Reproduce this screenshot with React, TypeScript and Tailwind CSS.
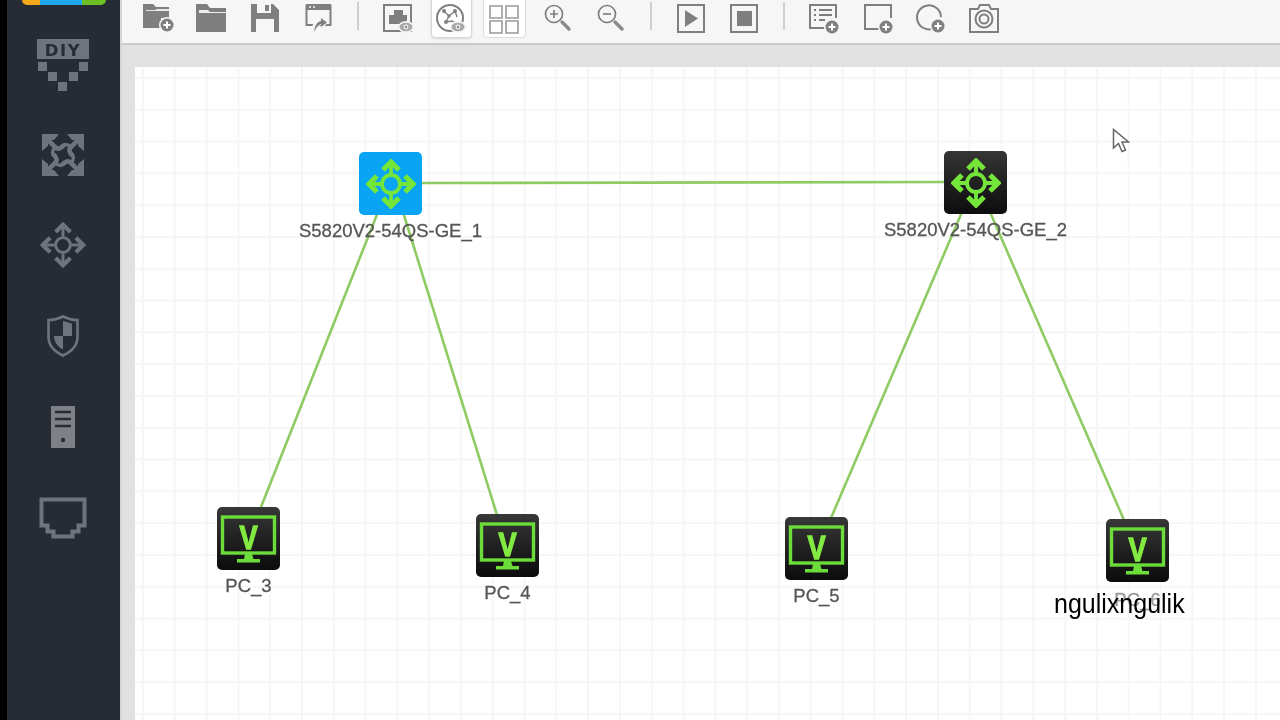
import React from "react";

const G = "#7f7f7f";

function Plus({ cx, cy, r = 6.5 }: { cx: number; cy: number; r?: number }) {
  return (
    <g>
      <circle cx={cx} cy={cy} r={r + 1.5} fill="#f5f5f5" />
      <circle cx={cx} cy={cy} r={r} fill={G} />
      <path d={`M${cx - 3.5} ${cy}H${cx + 3.5}M${cx} ${cy - 3.5}V${cy + 3.5}`} stroke="#fff" strokeWidth="2" />
    </g>
  );
}

function Eye({ cx, cy }: { cx: number; cy: number }) {
  return (
    <g>
      <ellipse cx={cx} cy={cy} rx="8" ry="6" fill="#f5f5f5" />
      <ellipse cx={cx} cy={cy} rx="6.5" ry="4.2" fill="#a9a9a9" />
      <circle cx={cx} cy={cy} r="2.4" fill="#f1f1f1" />
      <circle cx={cx} cy={cy} r="1.2" fill="#8a8a8a" />
    </g>
  );
}

function TI({ children }: { children: React.ReactNode }) {
  return (
    <svg width="32" height="32" viewBox="0 0 32 32" className="shrink-0" fill="none">
      {children}
    </svg>
  );
}

const Sep = () => <div className="w-[2px] h-[28px] bg-[#cfcfcf] mx-[1.7px] shrink-0" />;

function Toolbar() {
  return (
    <div className="h-[45px] bg-[#f6f6f6] border-b-2 border-[#c9c9c9] flex items-start pt-[2px] pl-[20px] gap-[21.3px]">
      <TI>
        <path d="M1 2h10l3 3h13v11H19v10H1z" fill={G} />
        <path d="M4 8h9l2-1h12v2H4z" fill="#e9e9e9" />
        <Plus cx={25} cy={23} />
      </TI>
      <TI>
        <path d="M1 2h11l3 4h16v24H1z" fill={G} />
        <path d="M4 8h9l2 2H31v1H4z" fill="#eeeeee" />
      </TI>
      <TI>
        <path d="M2 2h22l6 6v22H2z" fill={G} />
        <rect x="8" y="2" width="14" height="9" fill="#f6f6f6" />
        <rect x="16" y="3" width="4" height="6" fill={G} />
        <rect x="7" y="17" width="18" height="13" fill="#f6f6f6" />
      </TI>
      <TI>
        <rect x="4.5" y="4" width="24" height="19" stroke={G} strokeWidth="2" />
        <rect x="4" y="2" width="25" height="6" fill={G} />
        <path d="M7 5h2M11 5h2" stroke="#f6f6f6" strokeWidth="1.6" />
        <path d="M9 32c0-9 4-14 10-15v-4l8 7-8 7v-4c-4 1-6 5-10 9z" fill="#f6f6f6" />
        <path d="M12 30c1-7 3-10 7-11v-3l6 4.500-6 4.500v-3c-3 1-5 4-7 8z" fill={G} />
      </TI>
      <Sep />
      <TI>
        <rect x="2" y="3" width="27" height="26" stroke={G} strokeWidth="2" />
        <path d="M7 13h5v-5h9v5h4v9H7z" fill={G} />
        <Eye cx={24} cy={25} />
      </TI>
      <div className="w-[32px] h-[36px] relative shrink-0">
        <div className="absolute left-[-4px] top-[-6px] w-[41px] h-[42px] bg-white border border-[#d6d6d6] rounded-[4px] shadow-sm" />
        <svg width="32" height="32" viewBox="0 0 32 32" fill="none" className="relative">
          <circle cx="15" cy="16" r="13" stroke={G} strokeWidth="2" />
          <path d="M9 9l5 5 6-5M14 14l-3 6 6-1 5 3M20 9l2 6" stroke={G} strokeWidth="1.4" />
          <circle cx="9" cy="9" r="2" fill={G} />
          <circle cx="20" cy="9" r="2" fill={G} />
          <circle cx="11" cy="20" r="2" fill={G} />
          <circle cx="14" cy="14" r="1.7" fill={G} />
          <Eye cx={23} cy={25} />
        </svg>
      </div>
      <div className="w-[32px] h-[36px] relative shrink-0">
        <div className="absolute left-[-5px] top-[-6px] w-[43px] h-[42px] bg-white border border-[#dcdcdc] rounded-[4px]" />
        <svg width="32" height="32" viewBox="0 0 32 32" fill="none" className="relative">
          <path d="M2 4h12v12H2zM18 4h12v12H18zM2 19h12v12H2zM18 19h12v12H18z" stroke="#9a9a9a" strokeWidth="1.6" />
        </svg>
      </div>
      <TI>
        <circle cx="12" cy="12" r="8.500" stroke={G} strokeWidth="1.700" />
        <path d="M8 12h8M12 8v8" stroke={G} strokeWidth="1.700" />
        <path d="M20 20l7 7" stroke="#8a8a8a" strokeWidth="3.400" strokeLinecap="round" />
      </TI>
      <TI>
        <circle cx="12" cy="12" r="8.500" stroke={G} strokeWidth="1.700" />
        <path d="M8 12h8" stroke={G} strokeWidth="1.700" />
        <path d="M20 20l7 7" stroke="#8a8a8a" strokeWidth="3.400" strokeLinecap="round" />
      </TI>
      <Sep />
      <TI>
        <rect x="3" y="3" width="26" height="27" stroke={G} strokeWidth="2" />
        <path d="M10 8v17l13-8.500z" fill={G} />
      </TI>
      <TI>
        <rect x="3" y="3" width="26" height="27" stroke={G} strokeWidth="2" />
        <rect x="9" y="9" width="15" height="15" fill={G} />
      </TI>
      <Sep />
      <TI>
        <path d="M28 16V3H2v23h14" stroke={G} strokeWidth="2" />
        <path d="M6 8h2M6 13h2M6 18h2M11 8h13M11 13h13M11 18h6" stroke={G} strokeWidth="2" />
        <Plus cx={24} cy={25} />
      </TI>
      <TI>
        <path d="M29 16V3H3v24h15" stroke={G} strokeWidth="2" />
        <Plus cx={24} cy={25} />
      </TI>
      <TI>
        <path d="M17 27A12 12 0 1 1 26 15" stroke={G} strokeWidth="2" />
        <Plus cx={23} cy={24} />
      </TI>
      <TI>
        <path d="M2 7h8l2-4h9l2 4h7v23H2z" stroke={G} strokeWidth="2" />
        <circle cx="16" cy="17" r="8.500" stroke={G} strokeWidth="2" />
        <circle cx="16" cy="17" r="4.500" stroke={G} strokeWidth="2" />
      </TI>
    </div>
  );
}

function Route({ color, size = 50, w = 3.8, r = 9 }: { color: string; size?: number; w?: number; r?: number }) {
  return (
    <svg width={size} height={size} viewBox="0 0 50 50" fill="none" stroke={color}>
      <circle cx="25" cy="25" r={r} strokeWidth={w} />
      <path d="M25 16V4M25 34V46M16 25H4M34 25H46" strokeWidth={w} />
      <path d="M17 11L25 3l8 8M17 39l8 8 8-8M11 17l-8 8 8 8M39 17l8 8-8 8" strokeWidth={w + 1.4} />
    </svg>
  );
}

const SC = "#6f747c";

function CrossArm({ rot }: { rot: number }) {
  return (
    <g transform={`rotate(${rot} 21 21)`}>
      <path d="M0 0H17L12 6H6V12L0 17z" fill={SC} />
      <path d="M4 4L13 13Q17 17 22 11" stroke={SC} strokeWidth="4.600" fill="none" />
      <path d="M13 13Q8 19 13 23" stroke={SC} strokeWidth="3.400" fill="none" />
    </g>
  );
}

function Sidebar() {
  const cell = "h-[91px] flex items-center justify-center pr-[1px]";
  return (
    <div className="w-[120px] shrink-0 bg-[#272b33] border-l-[7px] border-black flex flex-col">
      <div className="h-[5px] w-[84px] ml-[15px] rounded-b-[8px] overflow-hidden flex">
        <div className="w-[18px] bg-[#f5a81c]" />
        <div className="w-[42px] bg-[#1ea7ea]" />
        <div className="w-[24px] bg-[#6cc024]" />
      </div>
      <div className="h-[14px]" />
      <div className={cell}>
        <svg width="52" height="52" viewBox="0 0 52 52" fill={SC}>
          <rect x="0" y="0" width="52" height="20" />
          <text x="26" y="16.500" textAnchor="middle" fontFamily="'DejaVu Sans', sans-serif" fontWeight="700" fontSize="16.500" letterSpacing="1.500" fill="#272b33">DIY</text>
          <rect x="1" y="23" width="9" height="9" />
          <rect x="42" y="23" width="9" height="9" />
          <rect x="11" y="33" width="9" height="9" />
          <rect x="32" y="33" width="9" height="9" />
          <rect x="21" y="43" width="9" height="9" />
        </svg>
      </div>
      <div className="h-[89px] flex items-center justify-center pr-[1px]">
        <svg width="42" height="42" viewBox="0 0 42 42" fill="none">
          <CrossArm rot={0} />
          <CrossArm rot={90} />
          <CrossArm rot={180} />
          <CrossArm rot={270} />
        </svg>
      </div>
      <div className={cell}>
        <Route color={SC} size={46} w={3.2} r={8} />
      </div>
      <div className={cell}>
        <svg width="32" height="42" viewBox="0 0 32 42" fill="none">
          <path d="M1.500 5C7 5 12 3.500 16 1.500 20 3.500 25 5 30.500 5v17c0 9-7 15-14.500 18.500C8.500 37 1.500 31 1.500 22z" stroke={SC} strokeWidth="2.600" />
          <path d="M16 6l9 2.500V21H16zM16 21H7c0 6 4 11 9 13.500z" fill={SC} />
        </svg>
      </div>
      <div className={cell}>
        <svg width="24" height="42" viewBox="0 0 24 42">
          <rect width="24" height="42" fill="#7d8187" />
          <path d="M4 6h16M4 13h16M4 20h16" stroke="#272b33" strokeWidth="2.500" />
          <circle cx="12" cy="34" r="2.200" fill="#272b33" />
        </svg>
      </div>
      <div className={cell}>
        <svg width="48" height="42" viewBox="0 0 48 42" fill="none">
          <path d="M2.500 2.500h43v26h-6v6h-6v5h-19v-5h-6v-6h-6z" stroke={SC} strokeWidth="4" />
        </svg>
      </div>
    </div>
  );
}

const labelCls =
  "absolute left-1/2 -translate-x-1/2 top-[69px] whitespace-nowrap text-[18.500px] leading-[20px] font-['Liberation_Sans',sans-serif] [-webkit-text-stroke:0.3px_currentColor]";

function SwitchNode({ cls, dark, label }: { cls: string; dark?: boolean; label: string }) {
  return (
    <div className={`absolute w-[63px] h-[63px] ${cls}`}>
      <div
        className={`w-[63px] h-[63px] rounded-[5px] flex items-center justify-center ${
          dark ? "bg-gradient-to-b from-[#363636] to-[#0d0d0d]" : "bg-[#0aa4f5]"
        }`}
      >
        <Route color="#74e63a" />
      </div>
      <div className={`${labelCls} text-[#555]`}>{label}</div>
    </div>
  );
}

function PcNode({ cls, label, tone = "text-[#555]" }: { cls: string; label: string; tone?: string }) {
  return (
    <div className={`absolute w-[63px] h-[63px] ${cls}`}>
      <div className="w-[63px] h-[63px] rounded-[5px] bg-gradient-to-b from-[#383838] to-[#0c0c0c]">
        <svg width="63" height="63" viewBox="0 0 63 63" fill="none">
          <rect x="5.500" y="10" width="52" height="36" stroke="#6cdc3a" strokeWidth="3.400" />
          <text transform="translate(31.500 42) scale(0.800 1)" textAnchor="middle" fontFamily="'Liberation Sans', sans-serif" fontWeight="700" fontSize="34" fill="#82ea42" stroke="#82ea42" strokeWidth="1.400">V</text>
          <path d="M28 47h7l1.500 5H27z" fill="#6cdc3a" />
          <rect x="20" y="52" width="23" height="3.500" fill="#6cdc3a" />
        </svg>
      </div>
      <div className={`${labelCls} ${tone}`}>{label}</div>
    </div>
  );
}

export default function App() {
  return (
    <div className="w-[1280px] h-[720px] overflow-hidden flex bg-[#e1e1e1] font-['Liberation_Sans',sans-serif] blur-[0.5px]">
      <Sidebar />
      <div className="flex-1 flex flex-col border-l-2 border-[#d5d5d5]">
        <Toolbar />
        <div className="flex-1 pt-[22px] pl-[13px]">
          <div className="relative w-full h-full bg-white bg-[linear-gradient(#f6f6f6_2px,transparent_2px),linear-gradient(90deg,#f6f6f6_2px,transparent_2px)] bg-[size:31.800px_31.800px] bg-[position:7px_10px]">
            <svg width="1145" height="653" viewBox="135 67 1145 653" className="absolute left-0 top-0" fill="none" stroke="#8ecb62" strokeWidth="2.600">
              <path d="M420 183L946 182" />
              <path d="M378 212L261 507" />
              <path d="M403 212L497 515" />
              <path d="M962 212L831 518" />
              <path d="M990 212L1124 520" />
            </svg>
            <SwitchNode cls="left-[224px] top-[85px]" label="S5820V2-54QS-GE_1" />
            <SwitchNode cls="left-[809px] top-[84px]" dark label="S5820V2-54QS-GE_2" />
            <PcNode cls="left-[82px] top-[440px]" label="PC_3" />
            <PcNode cls="left-[341px] top-[447px]" label="PC_4" />
            <PcNode cls="left-[650px] top-[450px]" label="PC_5" />
            <PcNode cls="left-[971px] top-[452px]" label="PC_6" tone="text-[#999] translate-y-[2px]" />
            <div className="absolute left-[919px] top-[521px] text-[25px] leading-[30px] text-black whitespace-nowrap scale-y-[1.120]">ngulixngulik</div>
            <svg width="18" height="26" viewBox="0 0 18 26" className="absolute left-[977px] top-[61px]">
              <path d="M1.500 1.500V20l5-4.500 3.500 8 3.500-1.500-3.500-8h6.500z" fill="#fff" stroke="#666" strokeWidth="1.500" />
            </svg>
          </div>
        </div>
      </div>
    </div>
  );
}
